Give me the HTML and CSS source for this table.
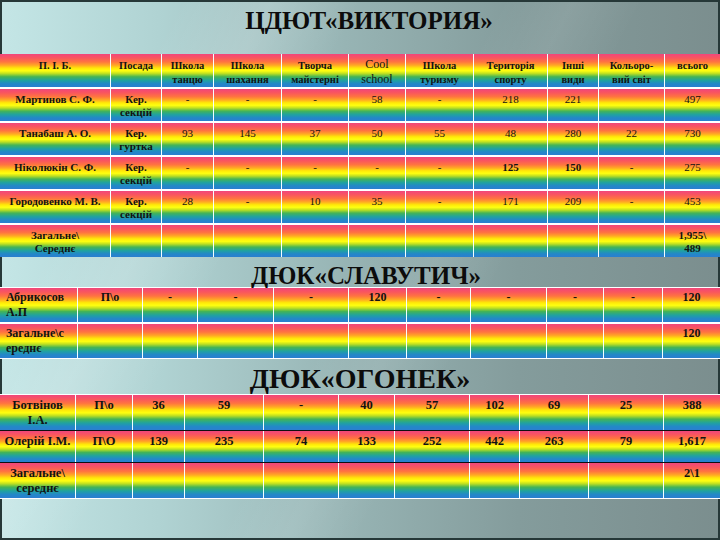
FILE: index.html
```html
<!DOCTYPE html>
<html lang="uk">
<head>
<meta charset="utf-8">
<title>ЦДЮТ «ВИКТОРИЯ»</title>
<link rel="stylesheet" href="styles.css">
</head>
<body>
<div class="slide">
  <h1 class="title t1">ЦДЮТ«ВИКТОРИЯ»</h1>
  <div class="table tb1">
    <div class="row head">
      <div class="c">П. І. Б.</div>
      <div class="c">Посада</div>
      <div class="c">Школа<br>танцю</div>
      <div class="c">Школа<br>шахання</div>
      <div class="c">Творча<br>майстерні</div>
      <div class="c cool">Cool<br>school</div>
      <div class="c">Школа<br>туризму</div>
      <div class="c">Територія<br>спорту</div>
      <div class="c">Інші<br>види</div>
      <div class="c">Кольоро-<br>вий світ</div>
      <div class="c">всього</div>
    </div>
    <div class="row">
      <div class="c b nw">Мартинов С. Ф.</div>
      <div class="c b">Кер.<br>секцій</div>
      <div class="c">-</div><div class="c">-</div><div class="c">-</div>
      <div class="c">58</div><div class="c">-</div><div class="c">218</div>
      <div class="c">221</div><div class="c"></div><div class="c">497</div>
    </div>
    <div class="row">
      <div class="c b nw">Танабаш А. О.</div>
      <div class="c b">Кер.<br>гуртка</div>
      <div class="c">93</div><div class="c">145</div><div class="c">37</div>
      <div class="c">50</div><div class="c">55</div><div class="c">48</div>
      <div class="c">280</div><div class="c">22</div><div class="c">730</div>
    </div>
    <div class="row">
      <div class="c b nw">Ніколюкін С. Ф.</div>
      <div class="c b">Кер.<br>секцій</div>
      <div class="c">-</div><div class="c">-</div><div class="c">-</div>
      <div class="c">-</div><div class="c">-</div><div class="c b">125</div>
      <div class="c b">150</div><div class="c">-</div><div class="c">275</div>
    </div>
    <div class="row">
      <div class="c b nw">Городовенко М. В.</div>
      <div class="c b">Кер.<br>секцій</div>
      <div class="c">28</div><div class="c">-</div><div class="c">10</div>
      <div class="c">35</div><div class="c">-</div><div class="c">171</div>
      <div class="c">209</div><div class="c">-</div><div class="c">453</div>
    </div>
    <div class="row">
      <div class="c b">Загальне\<br>Середнє</div>
      <div class="c"></div><div class="c"></div><div class="c"></div><div class="c"></div>
      <div class="c"></div><div class="c"></div><div class="c"></div><div class="c"></div>
      <div class="c"></div>
      <div class="c b">1,955\<br>489</div>
    </div>
  </div>

  <h2 class="title t2">ДЮК«СЛАВУТИЧ»</h2>
  <div class="table tb2">
    <div class="row">
      <div class="c left">Абрикосов<br>А.П</div>
      <div class="c">П\о</div>
      <div class="c">-</div><div class="c">-</div><div class="c">-</div>
      <div class="c">120</div>
      <div class="c">-</div><div class="c">-</div><div class="c">-</div><div class="c">-</div>
      <div class="c">120</div>
    </div>
    <div class="row">
      <div class="c left">Загальне\с<br>ереднє</div>
      <div class="c"></div><div class="c"></div><div class="c"></div><div class="c"></div>
      <div class="c"></div><div class="c"></div><div class="c"></div><div class="c"></div>
      <div class="c"></div>
      <div class="c">120</div>
    </div>
  </div>

  <h2 class="title t3">ДЮК«ОГОНЕК»</h2>
  <div class="table tb3">
    <div class="row r1">
      <div class="c">Ботвінов<br>І.А.</div>
      <div class="c">П\о</div>
      <div class="c">36</div><div class="c">59</div><div class="c">-</div>
      <div class="c">40</div><div class="c">57</div><div class="c">102</div>
      <div class="c">69</div><div class="c">25</div><div class="c">388</div>
    </div>
    <div class="row r2">
      <div class="c nw">Олерій І.М.</div>
      <div class="c">П\О</div>
      <div class="c">139</div><div class="c">235</div><div class="c">74</div>
      <div class="c">133</div><div class="c">252</div><div class="c">442</div>
      <div class="c">263</div><div class="c">79</div><div class="c">1,617</div>
    </div>
    <div class="row r3">
      <div class="c">Загальне\<br>середнє</div>
      <div class="c"></div><div class="c"></div><div class="c"></div><div class="c"></div>
      <div class="c"></div><div class="c"></div><div class="c"></div><div class="c"></div>
      <div class="c"></div>
      <div class="c">2\1</div>
    </div>
  </div>
</div>
</body>
</html>
```

FILE: styles.css
```css
html, body {
  margin: 0;
  padding: 0;
}

.slide {
  width: 720px;
  height: 540px;
  overflow: hidden;
  font-family: "Liberation Serif", "Times New Roman", serif;
  color: #121212;
  background:
    linear-gradient(118deg, rgba(255,255,255,0) 18%, rgba(255,255,255,0.14) 27%, rgba(255,255,255,0) 36%, rgba(255,255,255,0) 50%, rgba(255,255,255,0.08) 57%, rgba(255,255,255,0) 64%),
    linear-gradient(90deg, #c4e6e6 0%, #b0d3d3 22%, #97b4b4 48%, #849c9c 72%, #7b8e8e 100%);
  box-shadow: inset 0 0 0 2px #263838;
}

.title {
  margin: 0;
  text-align: center;
  font-weight: bold;
  color: #0c0c0c;
  box-sizing: border-box;
  white-space: nowrap;
}

.t1 {
  height: 54px;
  padding-top: 6px;
  padding-left: 18px;
  font-size: 25px;
  line-height: 30px;
}

.t2 {
  height: 30px;
  padding-top: 4px;
  padding-left: 12px;
  font-size: 25px;
  line-height: 30px;
}

.t3 {
  height: 35px;
  padding-top: 3px;
  font-size: 28px;
  line-height: 34px;
}

.table {
  display: flex;
  flex-direction: column;
  background: #ffffff;
}

.row {
  display: grid;
  column-gap: 1px;
  background: #f4ffff;
}

.c {
  text-align: center;
  background: linear-gradient(to bottom,
    #f0467c 0%,
    #f9565e 12%,
    #ff7440 24%,
    #ffa824 34%,
    #ffe808 43%,
    #ffff10 51%,
    #c0e020 59%,
    #44b456 69%,
    #20a2a0 80%,
    #2388c8 90%,
    #2a7ed0 100%);
}

.b { font-weight: bold; }
.nw { white-space: nowrap; }

/* Table 1 */
.tb1 {
  row-gap: 2px;
}
.tb1 .row {
  grid-template-columns: 110px 50px 51px 67px 66px 56px 67px 73px 50px 65px 55px;
  height: 32px;
  font-size: 11px;
  line-height: 13px;
}
.tb1 .row .c {
  padding-top: 4px;
  box-sizing: border-box;
}
.tb1 .head {
  height: 33px;
  font-size: 10.5px;
  line-height: 14px;
  font-weight: bold;
}
.tb1 .head .c {
  padding-top: 5px;
}
.tb1 .head .cool {
  font-weight: normal;
  font-size: 12px;
  padding-top: 3px;
  line-height: 15px;
}

/* Table 2 */
.tb2 {
  row-gap: 2px;
  border-top: 1px solid #ffffff;
  border-bottom: 1px solid #ffffff;
}
.tb2 .row {
  grid-template-columns: 77px 64px 54px 75px 74px 57px 63px 75px 56px 58px 57px;
  height: 34px;
  font-size: 12px;
  line-height: 15px;
  font-weight: bold;
}
.tb2 .row .c {
  padding-top: 2px;
  box-sizing: border-box;
}
.tb2 .row .left {
  text-align: left;
  padding-left: 6px;
}

/* Table 3 */
.tb3 {
  row-gap: 1px;
  background: #101010;
  border-top: 1px solid #ffffff;
  border-bottom: 1px solid #ffffff;
}
.tb3 .row {
  grid-template-columns: 75px 56px 51px 78px 74px 55px 74px 49px 68px 74px 56px;
  font-size: 12.5px;
  line-height: 15px;
  font-weight: bold;
}
.tb3 .r1, .tb3 .r3 { height: 35px; }
.tb3 .r2 { height: 31px; }
.tb3 .row .c {
  padding-top: 3px;
  box-sizing: border-box;
}
```
